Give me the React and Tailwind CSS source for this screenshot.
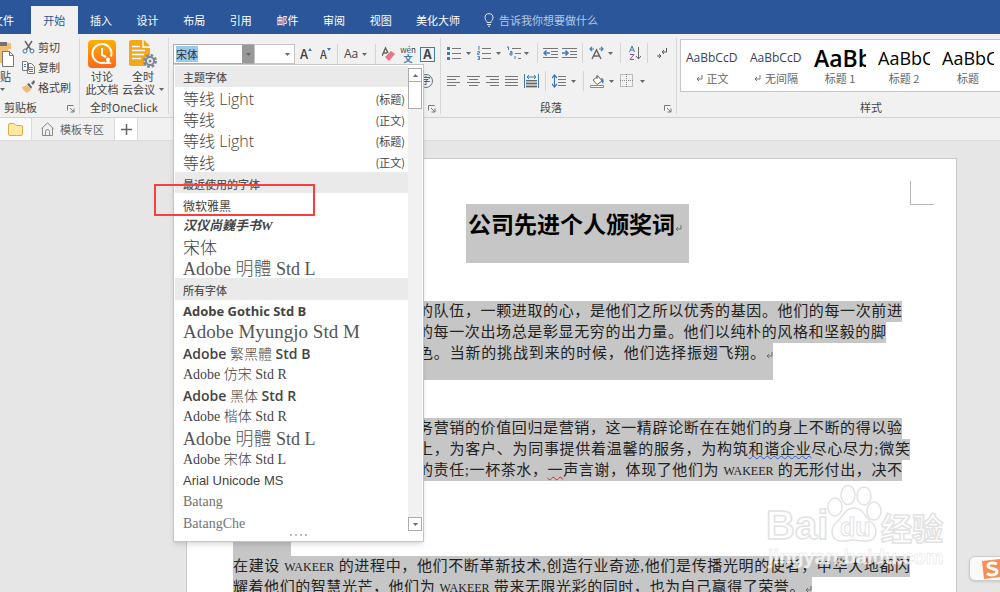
const TABS = ["开始", "插入", "设计", "布局", "引用", "邮件", "审阅", "视图"];

const STYLES = [
  { sample: "AaBbCcDd", name: "正文", mark: true, cls: "text-xs text-gray-700" },
  { sample: "AaBbCcDd", name: "无间隔", mark: true, cls: "text-xs text-gray-700" },
  { sample: "AaBb", name: "标题 1", cls: "text-[23px] font-semibold text-black" },
  { sample: "AaBbC", name: "标题 2", cls: "text-[18px] text-black" },
  { sample: "AaBbC", name: "标题", cls: "text-[18px] text-black" },
];

const SERIF = "font-['Liberation_Serif','Noto_Sans_CJK_SC',serif]";
const SANS = "font-['Open_Sans','Noto_Sans_CJK_SC',sans-serif]";

const FONTS = [
  { header: "主题字体" },
  { name: "等线 Light", note: "(标题)", cls: `${SANS} font-light text-base` },
  { name: "等线", note: "(正文)", cls: `${SANS} font-light text-base` },
  { name: "等线 Light", note: "(标题)", cls: `${SANS} font-light text-base` },
  { name: "等线", note: "(正文)", cls: `${SANS} font-light text-base` },
  { header: "最近使用的字体" },
  { name: "微软雅黑", cls: `${SANS} text-xs pt-1` },
  { name: "汉仪尚巍手书W", cls: `${SERIF} text-[13px] font-bold italic` },
  { name: "宋体", cls: `${SANS} font-light text-[17px]` },
  { name: "Adobe 明體 Std L", cls: `${SERIF} font-light text-[18px] text-[#555]` },
  { header: "所有字体" },
  { name: "Adobe Gothic Std B", cls: `${SANS} text-[13px] font-bold` },
  { name: "Adobe Myungjo Std M", cls: `${SERIF} text-[19px] text-[#555]` },
  { name: "Adobe 繁黑體 Std B", cls: `${SANS} text-sm font-semibold` },
  { name: "Adobe 仿宋 Std R", cls: `${SERIF} font-light text-sm` },
  { name: "Adobe 黑体 Std R", cls: `${SANS} text-sm font-semibold` },
  { name: "Adobe 楷体 Std R", cls: `${SERIF} font-light text-sm` },
  { name: "Adobe 明體 Std L", cls: `${SERIF} font-light text-[18px] text-[#555]` },
  { name: "Adobe 宋体 Std L", cls: `${SERIF} font-light text-sm` },
  { name: "Arial Unicode MS", cls: "font-['Liberation_Sans',sans-serif] text-[13px]" },
  { name: "Batang", cls: `${SERIF} text-sm text-[#77706a]` },
  { name: "BatangChe", cls: `${SERIF} text-sm text-[#6f747c]` },
];

const Caret = ({ className = "" }) => (
  <svg className={`shrink-0 ${className}`} width="5" height="3" viewBox="0 0 5 3">
    <path d="M0 0h5L2.5 3z" fill="#666" />
  </svg>
);

const Icon = ({ w = 14, h = 14, className = "", children }) => (
  <svg className={`shrink-0 ${className}`} width={w} height={h} viewBox={`0 0 ${w} ${h}`} fill="none">
    {children}
  </svg>
);

const Tool = ({ label, caret, gap = "ml-[9px]", className = "", children }) => (
  <button aria-label={label} className={`flex shrink-0 items-center ${className}`}>
    {children}
    {caret && <Caret className={gap} />}
  </button>
);

const Divider = ({ className = "" }) => <span className={`h-5 w-px shrink-0 bg-[#d4d4d4] ${className}`} />;

const Launcher = ({ label }) => (
  <button aria-label={label} className="shrink-0 pt-1">
    <Icon w={8} h={8}>
      <path d="M.5 5.500v-5h6M3 3l4 4M7 3.500V7H3.500" stroke="#777" />
    </Icon>
  </button>
);

const Group = ({ title, launcher, width, align = "text-center", children }) => (
  <section className={`flex shrink-0 flex-col ${width}`} aria-label={title}>
    <div className="h-[64px]">{children}</div>
    <div className="flex h-[18px] items-center px-1">
      <span className={`flex-1 whitespace-nowrap ${align}`}>{title}</span>
      {launcher && <Launcher label={`${title}设置`} />}
    </div>
  </section>
);

const GroupLine = () => <span className="mt-1 h-[76px] w-px shrink-0 bg-[#d8d8d8]" />;

const Lines = ({ rows, x = 0 }) =>
  rows.map(([from, to], i) => <path key={i} d={`M${x + from} ${2.5 + i * 3}H${x + to}`} stroke="#777" />);

const ReturnMark = ({ className = "" }) => (
  <svg className={`inline-block ${className}`} width="7" height="8" viewBox="0 0 7 8" fill="none">
    <path d="M6 1v4H1M3 3L1 5l2 2" stroke="#666" strokeWidth=".9" />
  </svg>
);

function TitleTabs() {
  return (
    <nav className="flex h-[34px] shrink-0 items-end overflow-hidden bg-[#2b579a] text-[11px] text-white">
      <button className="flex h-7 w-[31px] items-center">
        <span className="-ml-2 whitespace-nowrap">文件</span>
      </button>
      <div className="grid w-[373px] grid-cols-8">
        {TABS.map((tab, i) => (
          <button key={tab} className={`h-7 ${i === 0 ? "bg-[#f1f1f1] text-[#2b579a]" : ""}`}>
            {tab}
          </button>
        ))}
      </div>
      <button className="h-7 w-[68px]">美化大师</button>
      <label className="ml-3 flex h-7 flex-1 items-center gap-[5px]">
        <Icon w={10} h={14}>
          <path d="M3 9.500C3 8 1 7 1 4.700a4 4 0 0 1 8 0C9 7 7 8 7 9.500zM3 11.500h4M4 13.300h2" stroke="#dbe4f3" />
        </Icon>
        <input
          aria-label="告诉我你想要做什么"
          placeholder="告诉我你想要做什么"
          className="w-32 bg-transparent outline-none placeholder:text-[#b5c7e3]"
        />
      </label>
    </nav>
  );
}

function Clipboard() {
  return (
    <Group title="剪贴板" launcher width="w-[79px]" align="text-left">
      <div className="flex">
        <button aria-label="粘贴" className="flex w-[22px] flex-col items-start overflow-hidden pt-[6px]">
          <Icon w={15} h={28}>
            <path d="M0 3h11v6H8v14H0z" fill="#eebd72" />
            <path d="M0 2h7v4H0z" fill="#737373" />
            <path d="M2.500 11.500h7l4 4v11h-11z" fill="#fff" stroke="#777" />
            <path d="M9.500 11.500v4h4" stroke="#777" />
          </Icon>
          <span className="-ml-[11px] whitespace-nowrap leading-4">粘贴</span>
          <Caret className="mt-1" />
        </button>
        <div className="flex flex-col pt-[3px]">
          <button className="flex h-5 items-center gap-[3px] whitespace-nowrap">
            <Icon w={13}>
              <path d="M3 1l6 9M10 1L4 10" stroke="#666" strokeWidth="1.500" />
              <circle cx="3" cy="11" r="2" stroke="#3f7ab5" />
              <circle cx="10" cy="11" r="2" stroke="#3f7ab5" />
            </Icon>
            剪切
          </button>
          <button className="flex h-5 items-center gap-[3px] whitespace-nowrap">
            <Icon w={13}>
              <path d="M.5 1.500h4l2 2v7h-6zM5.500 3.500h4l3 3v7h-7z" fill="#fff" stroke="#777" />
              <path d="M2 4.500h2M2 6.500h2M7 7.500h4M7 9.500h4M7 11.500h4" stroke="#3f7ab5" />
            </Icon>
            复制
          </button>
          <button className="flex h-5 items-center gap-[3px] whitespace-nowrap">
            <Icon w={13}>
              <path d="M0 7l5-2 4 5-4 3c-2-1-4-3-5-6z" fill="#eebd72" />
              <path d="M5 4l2-1 3 4-1 2zM9 3l3-3 1 2-2 3z" fill="#666" />
            </Icon>
            格式刷
          </button>
        </div>
      </div>
    </Group>
  );
}

function OneClick() {
  return (
    <Group title="全时OneClick" width="w-[88px]">
      <div className="flex pl-[5px] pt-[6px]">
        <button className="flex w-[34px] flex-col items-center whitespace-nowrap leading-[13px]">
          <Icon w={28} h={28} className="mb-[2px]">
            <defs>
              <linearGradient id="clock" x2="0" y2="1">
                <stop stopColor="#ffb000" />
                <stop offset="1" stopColor="#ff661c" />
              </linearGradient>
            </defs>
            <rect width="28" height="28" rx="4" fill="url(#clock)" />
            <path d="M17 22.500a9.500 9.500 0 1 1 6-6M14 8v7l4 2" stroke="#fff" strokeWidth="2" />
            <path d="M17 23.500c1-2.500 5-2.500 6 0z" fill="#fff" stroke="#fff" />
            <circle cx="20" cy="19.500" r="2" fill="#fff" />
          </Icon>
          讨论
          <span>此文档</span>
        </button>
        <button className="ml-[2px] flex w-[44px] flex-col items-center whitespace-nowrap leading-[13px]">
          <Icon w={28} h={28} className="mb-[2px]">
            <path d="M2 0h13l6 6v20H2a2 2 0 0 1-2-2V2a2 2 0 0 1 2-2z" fill="#f2a81d" />
            <path d="M14 0v7h7M3 10.500h13M3 14.500h12M3 18.500h9M3 6.500h8" stroke="#fff" strokeWidth="1.300" />
            <circle cx="21" cy="21" r="5.500" fill="#f1f1f1" stroke="#7b8794" strokeWidth="3" strokeDasharray="2.500 1.800" />
            <circle cx="21" cy="21" r="4" fill="#f1f1f1" stroke="#7b8794" strokeWidth="2" />
            <circle cx="21" cy="21" r="1.500" fill="#7b8794" />
          </Icon>
          全时
          <span className="flex items-center">
            云会议
            <Caret className="ml-1" />
          </span>
        </button>
      </div>
    </Group>
  );
}

function FontGroup() {
  return (
    <Group title="" launcher width="w-[271px]">
      <div className="mt-[10px] flex h-5 items-center pl-1">
        <div className="flex h-5 w-[82px] shrink-0 items-center border border-[#ababab] bg-white pl-[2px]">
          <input aria-label="字体" defaultValue="宋体" className="w-[22px] bg-[#99c9ef] leading-4 text-[#333] outline-none" />
          <button aria-label="展开字体列表" className="ml-auto flex h-[18px] w-3 items-center justify-center bg-[#989898]">
            <Caret />
          </button>
        </div>
        <div className="-ml-px flex h-5 w-[41px] shrink-0 items-center border border-[#c6c6c6] bg-white pr-1">
          <input aria-label="字号" className="w-6 flex-1 bg-transparent outline-none" />
          <button aria-label="展开字号列表">
            <Caret />
          </button>
        </div>
        <Tool label="增大字号" className="ml-[5px]">
          <span className="text-[13px] font-medium">A</span>
          <Icon w={4} h={12}><path d="M0 3l2-3 2 3z" fill="#3f7ab5" /></Icon>
        </Tool>
        <Tool label="减小字号" className="ml-[8px]">
          <span className="text-[11px] font-medium">A</span>
          <Icon w={4} h={12}><path d="M0 0h4L2 3z" fill="#3f7ab5" /></Icon>
        </Tool>
        <Divider className="ml-[6px]" />
        <Tool label="更改大小写" caret gap="ml-1" className={`ml-[6px] text-xs ${SANS}`}>Aa</Tool>
        <Divider className="ml-2" />
        <Tool label="清除所有格式" className="ml-[6px]">
          <Icon h={16}>
            <path d="M0 10L3.500 2 6 7M1.500 7H5" stroke="#666" strokeWidth="1.500" />
            <path d="M3 11l6-6 4 3-6 7z" fill="#e8748a" />
          </Icon>
        </Tool>
        <Tool label="拼音指南" className="ml-1 flex-col">
          <span className="text-[8px] leading-[9px]">wén</span>
          <span className="text-[9px] font-bold leading-[10px] text-[#3f7ab5]">文</span>
        </Tool>
        <Tool label="字符边框" className="ml-1 h-[15px] w-[15px] justify-center border border-[#3f7ab5] text-[13px] font-bold">A</Tool>
      </div>
      <div className="mt-[7px] flex h-5 items-center justify-end pr-[7px]">
        <button aria-label="带圈字符" className="h-[14px] w-[14px] rounded-full border border-gray-500 text-[9px] leading-3">
          字
        </button>
      </div>
    </Group>
  );
}

const Levels = ({ kind }) => (
  <Icon w={14}>
    {kind === "multi" ? (
      <>
        <path d="M5 2.500h9M8 7.500h6M11 12.500h3" stroke="#777" />
        <path d="M0 1h1.500v3M3 5.500h2V9H3V7h2M8 10v3" stroke="#3f7ab5" />
      </>
    ) : (
      <>
        <path d="M5 2.500h9M5 7.500h9M5 12.500h9" stroke="#777" />
        {kind === "bullet" ? (
          <path d="M0 1h3v3H0zM0 6h3v3H0zM0 11h3v3H0z" fill="#3f7ab5" />
        ) : (
          <path d="M1 0h1v4M.5 5.500h2v1.500h-2v1.500h2M.5 10.500h2v3h-2M1 12h1" stroke="#3f7ab5" strokeWidth=".9" />
        )}
      </>
    )}
  </Icon>
);

const Indent = ({ out }) => (
  <Icon w={15} h={13}>
    <path d="M0 1.500h15M8 4.500h7M8 7.500h7M0 10.500h15" stroke="#777" />
    <path d={out ? "M7 6H1M3.500 3.500L1 6l2.500 2.500" : "M0 6h6M3.500 3.500L6 6 3.500 8.500"} stroke="#3f7ab5" strokeWidth="1.500" />
  </Icon>
);

function ParagraphGroup() {
  return (
    <Group title="段落" launcher width="w-[235px]" align="pl-[95px] text-left">
      <div className="mt-[9px] flex h-5 items-center pl-[6px]">
        <Tool label="项目符号" caret gap="ml-[5px]"><Levels kind="bullet" /></Tool>
        <Tool label="编号" caret gap="ml-[5px]" className="ml-[6px]"><Levels kind="number" /></Tool>
        <Tool label="多级列表" caret gap="ml-[3px]" className="ml-[6px]"><Levels kind="multi" /></Tool>
        <Divider className="ml-2" />
        <Tool label="减少缩进量" className="ml-[5px]"><Indent out /></Tool>
        <Tool label="增加缩进量" className="ml-1"><Indent /></Tool>
        <Divider className="ml-[5px]" />
        <Tool label="中文版式" caret gap="ml-[4px]" className="ml-[6px]">
          <Icon w={15}>
            <path d="M3 13L7.500 4 12 13M5 10h5" stroke="#666" strokeWidth="1.500" />
            <path d="M5 3H1M3 1L1 3l2 2M10 3h4M12 1l2 2-2 2" stroke="#3f7ab5" strokeWidth="1.200" />
          </Icon>
        </Tool>
        <Divider className="ml-[7px]" />
        <Tool label="排序" className="ml-2">
          <Icon w={13}>
            <path d="M.5 6L3 0l2.500 6M1.500 4h3" stroke="#3f7ab5" />
            <path d="M1 8.500h4l-4 5h4" stroke="#8757a8" />
            <path d="M9.500 1v12M7 10l2.500 3 2.500-3" stroke="#666" />
          </Icon>
        </Tool>
        <Divider className="ml-[5px]" />
        <Tool label="显示编辑标记" className="ml-[9px]">
          <Icon w={11}>
            <path d="M9.500 2v4H5M7 4L5 6l2 2" stroke="#555" />
            <path d="M0 10h4M2 8l2 2-2 2" stroke="#555" />
          </Icon>
        </Tool>
      </div>
      <div className="mt-2 flex h-5 items-center gap-[6px] pl-[6px]">
        <Tool label="左对齐"><Icon w={14}><Lines rows={[[0, 13], [0, 9], [0, 13], [0, 9]]} /></Icon></Tool>
        <Tool label="居中"><Icon w={13}><Lines rows={[[0, 13], [2, 11], [0, 13], [2, 11]]} /></Icon></Tool>
        <Tool label="右对齐"><Icon w={13}><Lines rows={[[0, 13], [4, 13], [0, 13], [4, 13]]} /></Icon></Tool>
        <Tool label="两端对齐"><Icon w={13}><Lines rows={[[0, 13], [0, 13], [0, 13], [0, 13]]} /></Icon></Tool>
        <Tool label="分散对齐">
          <Icon w={15}>
            <path d="M2 6h11v8H2z" fill="#bbb" />
            <path d="M2 6.500h11M2 9.500h11M2 12.500h11" stroke="#666" />
            <path d="M.5 0v14M14.500 0v14M3 3h9M5 1L3 3l2 2M10 1l2 2-2 2" stroke="#3f7ab5" />
          </Icon>
        </Tool>
        <Divider />
        <Tool label="行和段落间距" caret gap="ml-[5px]">
          <Icon w={14}>
            <path d="M2.500 1v12M0 4l2.500-3L5 4M0 10l2.500 3L5 10" stroke="#3f7ab5" strokeWidth="1.200" />
            <Lines x={6} rows={[[0, 8], [0, 8], [0, 8], [0, 8]]} />
          </Icon>
        </Tool>
        <Divider className="ml-[1px]" />
        <Tool label="底纹" caret gap="ml-[4px]">
          <Icon w={15}>
            <path d="M3 6l5-4 4 5-5 3.500zM7 1v4" fill="#fff" stroke="#666" />
            <path d="M11 4c3 0 3 3 2 6-2-2-1-4-2-6z" fill="#3f7ab5" />
            <path d="M.5 11.500h13v2H.5z" fill="#fff" stroke="#888" />
          </Icon>
        </Tool>
        <Tool label="边框" caret gap="ml-[7px]">
          <Icon w={13}>
            <path d="M.5.5h12v12H.5zM6.500 0v13M0 6.500h13" stroke="#888" strokeDasharray="1 1" />
          </Icon>
        </Tool>
      </div>
    </Group>
  );
}

function StylesGroup() {
  return (
    <section aria-label="样式" className="flex min-w-0 flex-1 flex-col overflow-hidden pl-[3px]">
      <div className="mt-[5px] flex h-[53px] border border-r-0 border-[#c6c6c6] bg-white">
        {STYLES.map((s, i) => (
          <button key={i} className="flex w-[64px] shrink-0 flex-col items-center pr-[2px]">
            <span className={`mt-2 flex h-5 w-[52px] items-center overflow-hidden whitespace-nowrap font-['Open_Sans',sans-serif] ${s.cls}`}>
              <span className="leading-5">{s.sample}</span>
            </span>
            <span className="flex items-center gap-1 whitespace-nowrap pt-[2px] leading-4 text-[#666]">
              {s.mark && <ReturnMark />}
              {s.name}
            </span>
          </button>
        ))}
      </div>
      <div className="mt-[6px] flex h-[18px] items-center pl-[180px]">样式</div>
    </section>
  );
}

// Chinese characters in a bold Latin face fall back to a thin one
const FontName = ({ name }) =>
  name.split(/([\u4e00-\u9fff]+)/).map((part, i) => (
    <span key={i} className={i % 2 && name.startsWith("Adobe") ? "font-light" : ""}>
      {part}
    </span>
  ));

function FontMenu() {
  return (
    <div className="absolute left-[173px] top-[64px] z-20 flex h-[478px] w-[251px] flex-col border border-[#c6c6c6] bg-white shadow-md">
      <div className="flex min-h-0 flex-1 px-px pt-px">
        <ul role="listbox" aria-label="字体列表" className="flex flex-1 flex-col text-[#444]">
          {FONTS.map((f, i) =>
            f.header ? (
              <li key={i} role="presentation" className="flex min-h-0 flex-1 items-center bg-[#eaeaea] pl-2 pt-[2px] text-[11px] font-medium text-[#555]">
                {f.header}
              </li>
            ) : (
              <li key={i} role="option" aria-selected={f.name === "宋体"} className="flex min-h-0 flex-1 items-center whitespace-nowrap pl-2 pt-[2px]">
                <span className={`flex-1 leading-5 ${f.cls}`}>
                  <FontName name={f.name} />
                </span>
                {f.note && <span className="pr-[3px] text-[11px]">{f.note}</span>}
              </li>
            )
          )}
        </ul>
        <div className="my-[2px] flex w-[14px] flex-col bg-[#f1f1f1]">
          <button aria-label="向上滚动" className="flex h-[14px] items-center justify-center border border-[#ababab] bg-white">
            <Caret className="rotate-180" />
          </button>
          <span className="-mt-px h-[28px] border border-[#ababab] bg-white" />
          <button aria-label="向下滚动" className="mt-auto flex h-[14px] items-center justify-center border border-[#ababab] bg-white">
            <Caret />
          </button>
        </div>
      </div>
      <div className="flex h-2 shrink-0 items-start justify-center gap-[3px] pt-px">
        {[0, 1, 2, 3].map((n) => (
          <span key={n} className="h-[2px] w-[2px] bg-[#b4bac8]" />
        ))}
      </div>
    </div>
  );
}

// One selected line of body text; lead skips the part under the font menu
const Line = ({ width = "w-[669px]", lead = "pl-[185px]", children }) => (
  <span className={`block h-[21px] whitespace-nowrap bg-[#c6c6c6] leading-5 [text-align-last:justify] ${width} ${lead}`}>
    {children}
  </span>
);

const Latin = () => <span className="text-xs">WAKEER</span>;

function Document() {
  return (
    <main className="flex-1 overflow-hidden bg-[#e6e6e6] pl-[186px] pr-[43px] pt-[17px]">
      <article className={`min-h-[500px] border border-[#c9c9c9] bg-white pl-[46px] text-[15px] text-[#222] ${SERIF}`}>
        <div className="flex h-[45px] justify-end pr-[22px] pt-[22px]">
          <span className="h-6 w-6 border-b border-l border-[#b5b5b5]" />
        </div>
        <h1 className="ml-[233px] h-[59px] w-[223px] whitespace-nowrap bg-[#c6c6c6] pl-[2px] pt-[7px] text-[23px] font-bold leading-[30px] text-black">
          公司先进个人颁奖词
          <ReturnMark />
        </h1>
        <p className="mt-[38px]">
          <Line>的队伍，一颗进取的心，是他们之所以优秀的基因。他们的每一次前进</Line>
          <Line width="w-[653px]">的每一次出场总是彰显无穷的出力量。他们以纯朴的风格和坚毅的脚</Line>
          <Line width="w-[540px]">色。当新的挑战到来的时候，他们选择振翅飞翔。<ReturnMark /></Line>
          <span className="block h-4 w-[540px] bg-[#c6c6c6]" />
        </p>
        <p className="mt-[38px]">
          <Line>务营销的价值回归是营销，这一精辟论断在在她们的身上不断的得以验</Line>
          <Line width="w-[677px]">
            上，为客户、为同事提供着温馨的服务，为构筑
            <span className="underline decoration-[#2b5fd0] decoration-wavy decoration-1">和谐企业</span>
            尽心尽力;微笑
          </Line>
          <Line>
            的责任;一杯茶水，
            <span className="underline decoration-[#e02020] decoration-wavy decoration-1">一</span>
            声言谢，体现了他们为 <Latin /> 的无形付出，决不
          </Line>
        </p>
        <p className="mt-[60px]">
          <span className="block h-[15px] w-[58px] bg-[#c6c6c6]" />
          <Line width="w-[677px]" lead="">
            在建设 <Latin /> 的进程中，他们不断革新技术,创造行业奇迹,他们是传播光明的使者，中华大地都闪
          </Line>
          <Line width="w-[579px]" lead="">
            耀着他们的智慧光芒，他们为 <Latin /> 带来无限光彩的同时，也为自己赢得了荣誉。<ReturnMark />
          </Line>
        </p>
      </article>
    </main>
  );
}

function Watermark() {
  return (
    <svg className="absolute bottom-[16px] right-[50px]" width="186" height="94" viewBox="0 0 186 94" fill="#fff" stroke="#e2e2e2" strokeWidth="1.500">
      <g fontFamily="Liberation Sans, Noto Sans CJK SC, sans-serif" fontWeight="bold">
        <text x="2" y="57" fontSize="40">Bai</text>
        <text x="117" y="58" fontSize="31">经验</text>
        <ellipse cx="71" cy="25" rx="7" ry="9" />
        <ellipse cx="84" cy="13" rx="7" ry="9.500" />
        <ellipse cx="100" cy="14" rx="7" ry="9" />
        <ellipse cx="110" cy="29" rx="7" ry="9" />
        <path d="M90 26c9 0 11 9 17 14 8 7 6 19-5 19-5 0-8-1-12-1s-7 1-12 1c-11 0-13-12-5-19 6-5 8-14 17-14z" />
        <text x="76" y="54" fontSize="25" strokeWidth="1">du</text>
        <text x="4" y="82" fontSize="20" fillOpacity=".8" strokeWidth=".5">jingyan.baidu.com</text>
      </g>
    </svg>
  );
}

export default function App() {
  return (
    <div className="relative flex h-screen flex-col overflow-hidden bg-[#e6e6e6] font-['Noto_Sans_CJK_SC',sans-serif] text-[11px] text-[#444]">
      <TitleTabs />
      <header className="flex h-[84px] shrink-0 overflow-hidden border-b border-[#d2d2d2] bg-[#f1f1f1]">
        <Clipboard />
        <GroupLine />
        <OneClick />
        <GroupLine />
        <FontGroup />
        <GroupLine />
        <ParagraphGroup />
        <GroupLine />
        <StylesGroup />
      </header>
      <div className="flex h-[23px] shrink-0 border-b border-[#dadada] bg-[#f1f1f1]">
        <button aria-label="文件夹" className="flex w-8 items-center justify-center border-r border-[#dadada] bg-[#fafafa]">
          <Icon w={15} h={13}>
            <path d="M.5 2a1.500 1.500 0 0 1 1.500-1.500h4l2 2h5a1.500 1.500 0 0 1 1.500 1.500v7a1.500 1.500 0 0 1-1.500 1.500H2A1.500 1.500 0 0 1 .5 11z" fill="#ffe8a0" stroke="#d9ab4a" />
          </Icon>
        </button>
        <button className="flex w-[82px] items-center gap-[6px] whitespace-nowrap pl-[9px] text-[#666]">
          <Icon w={13}>
            <path d="M.5 6.500l6-5.500 6 5.500M1.500 6v7.500h10V6M4.500 13V9.500a2 2 0 0 1 4 0V13" stroke="#888" />
          </Icon>
          模板专区
        </button>
        <button aria-label="新建标签" className="flex w-6 items-center justify-center border-x border-[#dadada] bg-white">
          <Icon w={11} h={11}><path d="M5.500 0v11M0 5.500h11" stroke="#666" strokeWidth="1.500" /></Icon>
        </button>
      </div>
      <Document />
      <FontMenu />
      <div className="pointer-events-none absolute left-[154px] top-[184px] z-30 h-[32px] w-[161px] border-2 border-[#fa3e3e]" />
      <Watermark />
      <button aria-label="输入法" className="absolute bottom-[11px] -right-2 flex h-[25px] w-[39px] items-center rounded-md border border-[#ccc] bg-[#fafafa] pl-[10px] shadow">
        <Icon w={22} h={22}>
          <path d="M2 3l19-2v18L4 21z" fill="#f98e54" />
          <path d="M17 6c-4-2-9-1-9 2s9 2 9 5.500-6 4.500-10 2" stroke="#fff" strokeWidth="3" />
        </Icon>
      </button>
    </div>
  );
}
